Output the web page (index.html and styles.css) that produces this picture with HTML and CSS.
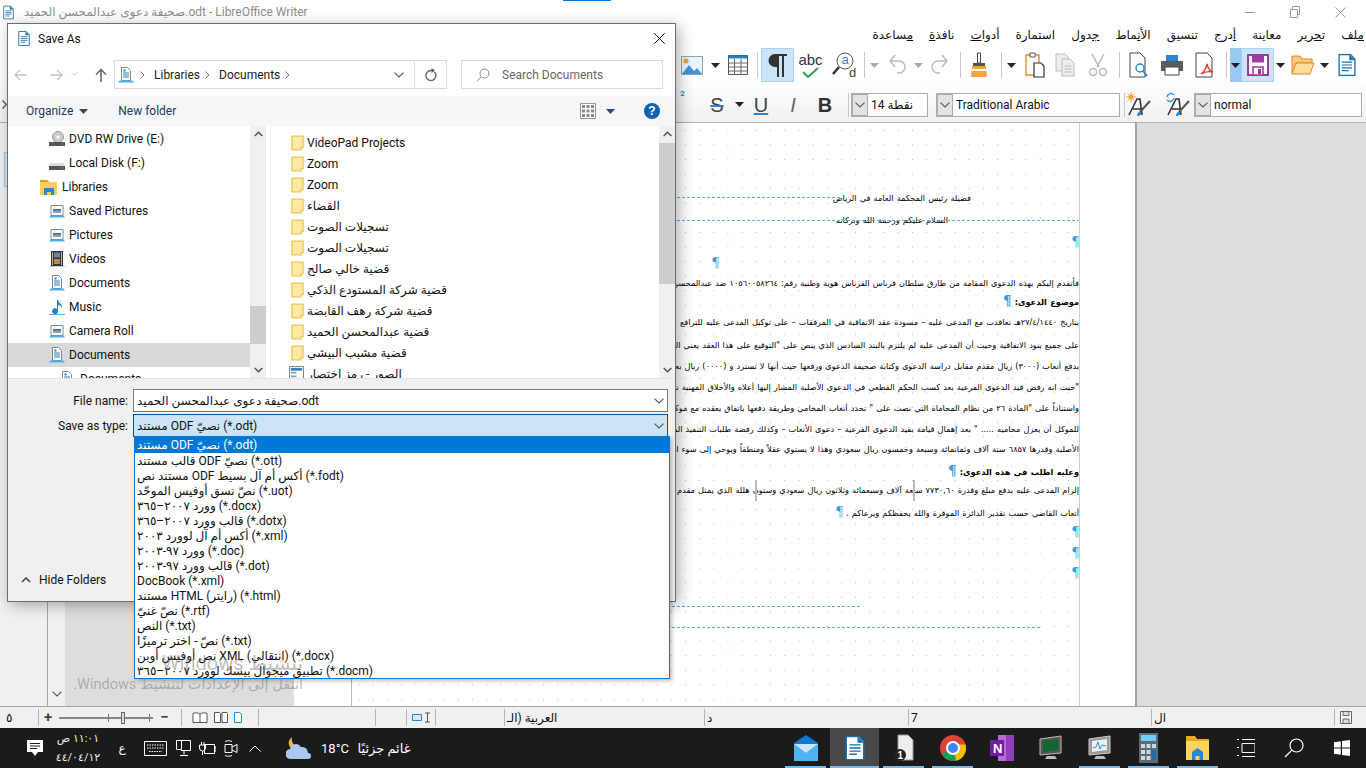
FILE: index.html
```html
<!DOCTYPE html>
<html lang="ar">
<head>
<meta charset="utf-8">
<title>LibreOffice Writer</title>
<link rel="stylesheet" href="styles.css">
</head>
<body>
<svg class="sprite" aria-hidden="true">
  <symbol id="writer" viewBox="0 0 16 20"><path d="M1 .7h10l4 4v14.600H1z" fill="#fff" stroke="#1a6fb0" stroke-width="1.200"/><path d="M10 .7l5 5h-5z" fill="#1a6fb0"/><path d="M3.500 7.500h9M3.500 10h9M3.500 12.500h9M3.500 15h6" stroke="#1a6fb0" stroke-width="1.100"/></symbol>
  <symbol id="folder" viewBox="0 0 14 17"><path d="M1 1h12v12.500h-2v2.500H1z" fill="#ffe9a3" stroke="#ecc755" stroke-width="1.400"/></symbol>
  <symbol id="pic" viewBox="0 0 16 16"><path d="M2 2.500h12v10H2z" fill="#fff" stroke="#7d8a96"/><path d="M4 6h8v4H4z" fill="#8aa2b6"/><path d="M4 6h8v1.500H4z" fill="#3a6f96"/><path d="M0 14.500h16l-1.500-2H1.500z" fill="#4fb0ec"/></symbol>
  <symbol id="docs" viewBox="0 0 16 16"><path d="M3.500 .5h6l3 3v10h-9z" fill="#fff" stroke="#7d8a96"/><path d="M5 6h6M5 8h6M5 10h6" stroke="#2a7fc0"/><path d="M5.500 2.500h2v2h-2z" fill="#2a7fc0"/><path d="M0 15.500h16l-1.500-2H1.500z" fill="#4fb0ec"/></symbol>
  <symbol id="arrow" viewBox="0 0 9 5"><path d="M0 0h9L4.500 5z" fill="#222"/></symbol>
  <symbol id="arrowg" viewBox="0 0 9 5"><path d="M0 0h9L4.500 5z" fill="#aaa"/></symbol>
  <symbol id="chev" viewBox="0 0 10 6"><path d="M.5.700L5 5l4.500-4.300" fill="none" stroke="#555" stroke-width="1.100"/></symbol>
</svg>

<div class="app">
  <header class="chrome">
    <div class="titlebar">
      <svg class="title-icon"><use href="#writer"/></svg>
      <span class="title-text" dir="ltr">صحيفة دعوى عبدالمحسن الحميد.odt - LibreOffice Writer</span>
      <div class="win-btns">
        <svg width="10" height="10" viewBox="0 0 10 10"><path d="M0 5.500h10" stroke="#999"/></svg>
        <svg width="10" height="12" viewBox="0 0 10 12"><path d="M.5 3.500h7v8h-7zM2.500 3.500v-3h7v8h-2" fill="none" stroke="#999"/></svg>
        <svg width="11" height="11" viewBox="0 0 11 11"><path d="M.5.500l10 10M10.500.500l-10 10" stroke="#999"/></svg>
      </div>
    </div>
    <nav class="menubar" dir="rtl">
      <span><u>م</u>لف</span><span>ت<u>ح</u>رير</span><span>معاينة</span><span><u>أ</u>درج</span><span>تنسيق</span><span>الأ<u>ن</u>ماط</span><span><u>ج</u>دول</span><span>استمارة</span><span>أدوا<u>ت</u></span><span>نافذ<u>ة</u></span><span><u>م</u>ساعدة</span>
    </nav>
    <div class="tools tools-main">
      <i><svg width="24" height="24" viewBox="0 0 24 24"><path d="M1.500 3.500h21v18h-21z" fill="#eaf4fb" stroke="#8aa"/><circle cx="6" cy="8" r="2.500" fill="#f0a030"/><path d="M2 21l7-9 5 6 3-3 5 6z" fill="#3f93d6"/></svg></i>
      <i><svg class="dd"><use href="#arrow"/></svg></i>
      <i><svg width="20" height="20" viewBox="0 0 20 20"><path d="M.5 .5h19v19H.5z" fill="#fff" stroke="#555"/><path d="M.5 .5h19v3H.5z" fill="#2a7fc0"/><path d="M.5 8h19M.5 12h19M.5 16h19M6.500 4v16M13 4v16" stroke="#666"/></svg></i>
      <b class="gap3"></b><i class="sep"></i>
      <i class="on"><svg width="24" height="26" viewBox="0 0 24 26"><path d="M11 2H9a6.500 6.500 0 0 0 0 13h2v10h2V4h3v21h2V4h3V2z" fill="#333"/></svg></i>
      <i><span class="abc">abc<svg width="19" height="11" viewBox="0 0 19 11"><path d="M2 5l5 5L17 1" fill="none" stroke="#2da44e" stroke-width="2"/></svg></span></i>
      <i><svg width="26" height="28" viewBox="0 0 26 28"><circle cx="14" cy="10" r="8" fill="#fff" stroke="#555"/><path d="M8 16l-6 7" stroke="#333" stroke-width="2.500"/><text x="10.500" y="13" class="svgt svgb">a</text><text x="18" y="26" class="svgt">d</text></svg></i>
      <i class="sep"></i>
      <i><svg class="dd"><use href="#arrowg"/></svg></i>
      <i><svg width="22" height="22" viewBox="0 0 22 22"><path d="M5 10h9a6 6 0 0 1 0 12h-2M5 10l5-6M5 10l5 6" transform="translate(0 -3)" fill="none" stroke="#bbb" stroke-width="1.500"/></svg></i>
      <i><svg class="dd"><use href="#arrowg"/></svg></i>
      <i><svg width="22" height="22" viewBox="0 0 22 22"><path d="M17 10H8a6 6 0 0 0 0 12h2M17 10l-5-6M17 10l-5 6" transform="translate(0 -3)" fill="none" stroke="#bbb" stroke-width="1.500"/></svg></i>
      <i class="sep"></i>
      <i><svg width="16" height="26" viewBox="0 0 16 26"><path d="M6.500 1h3v10h-3z" fill="#fff" stroke="#444"/><path d="M2 11h12v3H2z" fill="#555"/><path d="M1 14h14l1 11H0z" fill="#f4a340"/><path d="M1 17h14v2H1z" fill="#fff"/></svg></i>
      <i class="sep"></i>
      <i><svg class="dd"><use href="#arrow"/></svg></i>
      <i><svg width="20" height="26" viewBox="0 0 20 26"><path d="M1 3h13v20H1z" fill="#fff" stroke="#e78a2a" stroke-width="1.400"/><path d="M5 1h5v4H5z" fill="#fff" stroke="#555"/><path d="M9 11h7l3 3v11H9z" fill="#fff" stroke="#333" stroke-width="1.200"/></svg></i>
      <i><svg width="20" height="24" viewBox="0 0 20 24"><path d="M1 1h9l3 3v14H1z" fill="#eee" stroke="#bbb"/><path d="M7 6h8l4 4v13H7z" fill="#eee" stroke="#bbb"/><path d="M9.500 13h7M9.500 16h7M9.500 19h7" stroke="#bbb"/></svg></i>
      <b class="gap3"></b>
      <i><svg width="20" height="24" viewBox="0 0 20 24"><path d="M4 1l7 13M16 1L9 14" stroke="#bbb" stroke-width="1.500"/><circle cx="5" cy="19" r="3.500" fill="none" stroke="#bbb" stroke-width="1.500"/><circle cx="15" cy="19" r="3.500" fill="none" stroke="#bbb" stroke-width="1.500"/></svg></i>
      <i class="sep"></i>
      <i><svg width="20" height="26" viewBox="0 0 20 26"><path d="M1 1h10l5 5v19H1z" fill="#fff" stroke="#444"/><circle cx="11" cy="16" r="4" fill="#fff" stroke="#2a86d0" stroke-width="1.400"/><path d="M14 19l4 5" stroke="#2a86d0" stroke-width="2"/></svg></i>
      <i><svg width="24" height="22" viewBox="0 0 24 22"><path d="M6 1h12v6H6z" fill="#2a86d0"/><path d="M1 7h22v10H1z" fill="#565c60"/><path d="M5 13h14v8H5z" fill="#fff" stroke="#444"/></svg></i>
      <i><svg width="20" height="26" viewBox="0 0 20 26"><path d="M1 1h11l5 5v19H1z" fill="#fff" stroke="#444"/><path d="M12 12c-1 5-3 8-6 10 3-2 7-3 12-2-4-1-5-4-6-8z" fill="none" stroke="#e33" stroke-width="1.300"/></svg></i>
      <i class="sep"></i>
      <b class="gap2"></b>
      <i class="split"><svg class="dd"><use href="#arrow"/></svg></i>
      <i class="on slim"><svg width="22" height="22" viewBox="0 0 22 22"><path d="M1 1h20v20H1z" fill="#fff" stroke="#a03aa3" stroke-width="2"/><path d="M5 1.500h12v7H5z" fill="#a03aa3"/><path d="M6 13h10v8H6z" fill="#fff" stroke="#a03aa3" stroke-width="1.600"/><path d="M11 15h3v5h-3z" fill="#a03aa3"/></svg></i>
      <i><svg class="dd"><use href="#arrow"/></svg></i>
      <i><svg width="24" height="20" viewBox="0 0 24 20"><path d="M1 1h8l2 3h10v4H5L1 19z" fill="#ffc97a" stroke="#e08a22"/><path d="M5 8h18l-4 11H1z" fill="#ffdd9c" stroke="#e08a22"/></svg></i>
      <i><svg class="dd"><use href="#arrow"/></svg></i>
      <i><svg width="18" height="24" viewBox="0 0 16 20"><use href="#writer"/></svg></i>
    </div>
    <div class="tools tools-fmt">
      <span class="sup">²</span>
      <i class="sep"></i>
      <i><span class="fmt strike">S</span></i>
      <i><svg class="dd"><use href="#arrow"/></svg></i>
      <i><span class="fmt under">U</span></i>
      <i><span class="fmt ital">I</span></i>
      <i><span class="fmt bold">B</span></i>
      <i class="sep"></i>
      <div class="combo"><span class="combo-btn"><svg class="chev"><use href="#chev"/></svg></span><span class="combo-val">14 نقطة</span></div>
      <b></b>
      <div class="combo"><span class="combo-btn"><svg class="chev"><use href="#chev"/></svg></span><span class="combo-val">Traditional Arabic</span></div>
      <i class="sep"></i>
      <i><svg width="26" height="26" viewBox="0 0 26 26"><circle cx="5" cy="5" r="2.500" fill="#f4a340"/><path d="M5 0v10M0 5h10M1.500 1.500l7 7M8.500 1.500l-7 7" stroke="#f4a340"/><path d="M3 23L11 7h3l2 16M7 17h9" fill="none" stroke="#333" stroke-width="1.600"/><path d="M14 20L24 9" stroke="#555" stroke-width="2"/><path d="M11 24c0-3 2-5 4-4 1 2-1 4-4 4z" fill="#2a86d0"/></svg></i>
      <b></b>
      <i><svg width="26" height="26" viewBox="0 0 26 26"><path d="M2 5a4 4 0 0 1 7-2M9 6a4 4 0 0 1-7 2" fill="none" stroke="#2a9ae0" stroke-width="1.500"/><path d="M3 23L11 7h3l2 16M7 17h9" fill="none" stroke="#333" stroke-width="1.600"/><path d="M14 20L24 9" stroke="#555" stroke-width="2"/><path d="M11 24c0-3 2-5 4-4 1 2-1 4-4 4z" fill="#2a86d0"/></svg></i>
      <div class="combo"><span class="combo-btn"><svg class="chev"><use href="#chev"/></svg></span><span class="combo-val">normal</span></div>
    </div>
  </header>

  <main class="workspace">
    <aside class="side"></aside>
    <div class="vscroll"><svg class="chev"><use href="#chev"/></svg></div>
    <div class="desk">
      <article class="page">
        <div class="sheet" dir="rtl">
          <div class="ln c1">فضيلة رئيس المحكمة العامة في الرياض</div>
          <div class="ln c2">السلام عليكم ورحمة الله وبركاته</div>
          <div class="ln"><em>¶</em></div>
          <div class="ln c3"><em>¶</em></div>
          <div class="ln">فأتقدم إليكم بهذه الدعوى المقامة من طارق سلطان قرناس القرناس هوية وطنية رقم: ١٠٥٦٠٠٥٨٢٦٤ ضد عبدالمحسن الحميد المقيم في مدينة الرياض</div>
          <div class="ln strong up">موضوع الدعوى: <em>¶</em></div>
          <div class="ln dn1">بتاريخ ٢٧/٤/١٤٤٠هـ تعاقدت مع المدعى عليه – مسودة عقد الاتفاقية في المرفقات – على توكيل المدعى عليه للترافع عني أمام المحكمة في القضية</div>
          <div class="ln dn">على جميع بنود الاتفاقية وحيث أن المدعى عليه لم يلتزم بالبند السادس الذي ينص على "التوقيع على هذا العقد يعني الموافقة على جميع البنود الواردة فيه</div>
          <div class="ln">بدفع أتعاب (٣٠٠٠) ريال مقدم مقابل دراسة الدعوى وكتابة صحيفة الدعوى ورفعها حيث أنها لا تسترد و (٠٠٠٠) ريال بعد صدور الحكم القطعي</div>
          <div class="ln">"حيث انه رفض قيد الدعوى الفرعية بعد كسب الحكم القطعي في الدعوى الأصلية المشار إليها أعلاه والأخلاق المهنية تقتضي ذلك</div>
          <div class="ln t">واستناداً على "المادة ٢٦ من نظام المحاماة التي نصت على " تحدد أتعاب المحامي وطريقة دفعها باتفاق يعقده مع موكله فإن لم يكن هناك اتفاق</div>
          <div class="ln t">للموكل أن يعزل محاميه ..... " بعد إهمال قيامة بقيد الدعوى الفرعية – دعوى الأتعاب – وكذلك رفضة طلبات التنفيذ المقدمة في الدعوى الأصلية</div>
          <div class="ln t">الأصلية وقدرها ٦٨٥٧ ستة آلاف وثمانمائة وسبعة وخمسون ريال سعودي وهذا لا يستوي عقلاً ومنطقاً ويوحي إلى سوء النية في التعامل مع موكله</div>
          <div class="ln t strong">وعليه اطلب في هذه الدعوى: <em>¶</em></div>
          <div class="ln t">إلزام المدعى عليه بدفع مبلغ وقدرة ٧٧٣٠,٦٠ سبعة آلاف وسبعمائة وثلاثون ريال سعودي وستون هلله الذي يمثل مقدم الأتعاب والمبلغ المستحق للموكل</div>
          <div class="ln t">أتعاب القاضي حسب تقدير الدائرة الموقرة والله يحفظكم ويرعاكم . <em>¶</em></div>
          <div class="ln t"><em>¶</em></div>
          <div class="ln t"><em>¶</em></div>
          <div class="ln t"><em>¶</em></div>
          <span class="dash d1"></span><span class="dash d2"></span><span class="dash d3"></span><span class="dash d4"></span>
          <span class="field f1"></span><span class="field f2"></span>
        </div>
      </article>
    </div>
  </main>

  <footer class="status">
    <span class="st st1">٥</span>
    <span class="st st2 zoomer"><b>+</b><span class="slider"><span class="tick t1"></span><span class="thumb"></span><span class="tick t2"></span></span><b>−</b></span>
    <span class="st st3 views">
      <svg width="16" height="11" viewBox="0 0 16 11"><path d="M1 1.500c2-1 5-1 7 .5 2-1.500 5-1.500 7-.5v9H1zM8 2v8.500" fill="#fff" stroke="#555"/></svg>
      <svg width="14" height="11" viewBox="0 0 14 11"><path d="M.5.500h5l1 1v9h-6zM8 .5h5l.5 1v9H8z" fill="#fff" stroke="#555"/></svg>
      <svg width="8" height="11" viewBox="0 0 8 11"><path d="M.5.500h5l2 2v8h-7z" fill="#fff" stroke="#2a86d0"/></svg>
    </span>
    <span class="st"></span>
    <span class="st"></span>
    <span class="st st6"><svg width="20" height="11" viewBox="0 0 20 11"><path d="M.5 2.500h9v6h-9z" fill="#d5eaf9" stroke="#2a86d0"/><path d="M13 1h5M15.500 1v9M13 10h5" stroke="#555"/></svg></span>
    <span class="st"></span>
    <span class="st st7">العربية (الـ</span>
    <span class="st">د</span>
    <span class="st">7</span>
    <span class="st">ال</span>
    <span class="st st11"><svg width="12" height="13" viewBox="0 0 12 13"><path d="M.5.500h11v12H.5z" fill="#fff" stroke="#666"/><path d="M3 .5h6v4H3zM3 8h6v4.500H3z" fill="#ddd" stroke="#666"/></svg></span>
  </footer>

  <footer class="taskbar">
    <div class="tray">
      <span class="tr"><svg width="16" height="18" viewBox="0 0 16 18"><path d="M0 1h16v12h-5l-3 4-3-4H0z" fill="#fff"/><path d="M3 4.500h10M3 7h10M3 9.500h7" stroke="#1b1b1b"/></svg></span>
      <span class="tr clock" dir="rtl"><span>١١:٠١ ص</span><span>٤٤/٠٤/١٢</span></span>
      <span class="tr lang">ع</span>
      <span class="tr"><svg width="23" height="15" viewBox="0 0 23 15"><path d="M.5.500h22v14H.5z" fill="none" stroke="#fff"/><path d="M3 4h17M3 7h17M5 10.500h13" stroke="#fff" stroke-dasharray="1.500 1"/></svg></span>
      <span class="tr"><svg width="15" height="17" viewBox="0 0 15 17"><path d="M.5.500h5v9h-5zM3 .5h11.500v10H5M8 10.500v4M4 15.500h8" fill="none" stroke="#fff"/></svg></span>
      <span class="tr"><svg width="17" height="13" viewBox="0 0 17 13"><path d="M5.500 2.500h10v9h-10zM15.500 5h1.500v4h-1.500M2.500 0v3M5 0v3M.5 3h6v3a3 3 0 0 1-6 0zM3.500 9v4" fill="none" stroke="#fff"/></svg></span>
      <span class="tr"><svg width="16" height="17" viewBox="0 0 16 17"><path d="M2 4.500h7v8H2zM9 7l5-2.500v8L9 10M2 1.500c2-1 5-1 7 0M2 15.500c2 1 5 1 7 0" fill="none" stroke="#fff"/></svg></span>
      <span class="tr"><svg width="12" height="7" viewBox="0 0 12 7"><path d="M.5 6.500L6 1l5.500 5.500" fill="none" stroke="#fff"/></svg></span>
      <span class="tr wx"><svg width="26" height="24" viewBox="0 0 26 24"><path d="M6 1a8 8 0 0 0 8 10A8 8 0 0 1 4 11a7 7 0 0 1 2-10z" fill="#f4b13c"/><path d="M5 23a5 5 0 0 1-1-10 6 6 0 0 1 11-2 6 6 0 0 1 7 6 3 3 0 0 1 0 6z" fill="#a8c8f0"/></svg></span>
      <span class="tr temp">18°C</span>
      <span class="tr cond">غائم جزئيًا</span>
    </div>
    <div class="apps">
      <span class="app-i run"><svg width="24" height="26" viewBox="0 0 24 26"><path d="M0 8L12 0l12 8v18H0z" fill="#0f78d4"/><path d="M0 9l12 9 12-9v17H0z" fill="#4fb3f0"/><path d="M0 9l12 9 12-9" fill="#c9e6fb"/></svg></span>
      <span class="app-i run active"><svg width="20" height="28" viewBox="0 0 16 20"><use href="#writer"/></svg></span>
      <span class="app-i run"><svg width="20" height="28" viewBox="0 0 20 28"><path d="M4 1h10l5 5v20H4z" fill="#eee" stroke="#999"/><circle cx="6" cy="21" r="6" fill="#222"/><text x="3.500" y="25" class="svgw">1</text></svg></span>
      <span class="app-i run"><svg width="26" height="26" viewBox="0 0 26 26"><circle cx="13" cy="13" r="13" fill="#db4437"/><path d="M13 13L2 19a13 13 0 0 0 14 6.700z" fill="#0f9d58"/><path d="M13 13l3 12.700A13 13 0 0 0 25.500 9.500H13z" fill="#fbbc05"/><circle cx="13" cy="13" r="6" fill="#4285f4" stroke="#fff" stroke-width="2"/></svg></span>
      <span class="app-i"><svg width="24" height="28" viewBox="0 0 24 28"><path d="M8 1h16v26H8z" fill="#b66bd6"/><path d="M16 1h8v26h-8z" fill="#8f3fb8"/><path d="M0 6h14v16H0z" fill="#7719aa"/><text x="3" y="18.500" class="svgn">N</text></svg></span>
      <span class="app-i"><svg width="24" height="26" viewBox="0 0 24 26"><path d="M1 4l21-3v17L1 20z" fill="#555" stroke="#bbb"/><path d="M4 6l15-2v11L4 17z" fill="#163"/><path d="M8 21h8l2 3H6z" fill="#bbb"/></svg></span>
      <span class="app-i run"><svg width="24" height="26" viewBox="0 0 24 26"><path d="M1 4l21-3v17L1 20z" fill="#999" stroke="#ccc"/><path d="M4 6l15-2v11L4 17z" fill="#e8f1f7"/><path d="M5 13l3-1 2-5 2 7 2-4 4 1" fill="none" stroke="#3a8fd0"/><path d="M8 21h8l2 3H6z" fill="#bbb"/></svg></span>
      <span class="app-i run"><svg width="19" height="30" viewBox="0 0 19 30"><path d="M0 0h19v30H0z" fill="#5b6b78"/><path d="M2 2h15v6H2z" fill="#6fd0f5"/><path d="M2 11h4v4H2zM7.500 11h4v4h-4zM13 11h4v4h-4zM2 17h4v4H2zM7.500 17h4v4h-4zM2 23h4v4H2zM7.500 23h4v4h-4z" fill="#cfd8de"/><path d="M13 17h4v10h-4z" fill="#1e6fb0"/></svg></span>
      <span class="app-i run"><svg width="23" height="24" viewBox="0 0 23 24"><path d="M0 0h9l2 3h12v21H0z" fill="#e8a818"/><path d="M0 5h23v19H0z" fill="#ffd35c"/><path d="M6 24v-8l5.500-4 5.500 4v8z" fill="#2a86d0"/><path d="M9.500 24v-4h4v4z" fill="#ffd35c"/></svg></span>
      <span class="sys"><svg width="18" height="18" viewBox="0 0 18 18"><path d="M0 .5h2M5 .5h13M0 8.500h2M5 4.500h13v9H5zM0 16.500h2M5 17.500h13" fill="none" stroke="#fff"/></svg></span>
      <span class="sys"><svg width="20" height="20" viewBox="0 0 20 20"><circle cx="12.500" cy="7.500" r="6.500" fill="none" stroke="#fff" stroke-width="1.200"/><path d="M8 12l-7 7" stroke="#fff" stroke-width="1.200"/></svg></span>
      <span class="sys"><svg width="16" height="16" viewBox="0 0 16 16"><path d="M0 2.300l6.800-1V7.500H0zM8 1.100L16 0v7.500H8zM0 8.500h6.800v6.200L0 13.700zM8 8.500h8V16l-8-1.100z" fill="#fff"/></svg></span>
    </div>
  </footer>
</div>

<section class="dialog">
  <div class="dlg-title">
    <svg class="dlg-logo"><use href="#writer"/></svg>
    <span>Save As</span>
    <svg class="dlg-close" width="11" height="11" viewBox="0 0 11 11"><path d="M.3.300l10.400 10.400M10.700.300L.3 10.700" stroke="#111"/></svg>
  </div>
  <div class="dlg-nav">
    <svg class="nav-a" width="14" height="12" viewBox="0 0 14 12"><path d="M13 6H1.500M6 1L1 6l5 5" fill="none" stroke="#c4c4c4" stroke-width="1.300"/></svg>
    <svg class="nav-b" width="14" height="12" viewBox="0 0 14 12"><path d="M1 6h11.500M8 1l5 5-5 5" fill="none" stroke="#c4c4c4" stroke-width="1.300"/></svg>
    <svg class="nav-c" width="7" height="5" viewBox="0 0 7 5"><path d="M.5.500l3 3 3-3" fill="none" stroke="#c4c4c4"/></svg>
    <svg class="nav-d" width="12" height="14" viewBox="0 0 12 14"><path d="M6 14V1.500M1 6.500l5-5 5 5" fill="none" stroke="#666" stroke-width="1.500"/></svg>
    <div class="address">
      <svg class="addr-i"><use href="#docs"/></svg>
      <svg class="crumb" width="5" height="8" viewBox="0 0 5 8"><path d="M.5.500L4 4 .5 7.500" fill="none" stroke="#777"/></svg>
      <span>Libraries</span>
      <svg class="crumb" width="5" height="8" viewBox="0 0 5 8"><path d="M.5.500L4 4 .5 7.500" fill="none" stroke="#777"/></svg>
      <span>Documents</span>
      <svg class="crumb" width="5" height="8" viewBox="0 0 5 8"><path d="M.5.500L4 4 .5 7.500" fill="none" stroke="#777"/></svg>
      <svg class="chev addr-ch"><use href="#chev"/></svg>
      <span class="refresh"><svg width="12" height="14" viewBox="0 0 12 14"><path d="M9.500 4a5 5 0 1 1-3.500-1.500H9" fill="none" stroke="#666" stroke-width="1.400"/><path d="M6.500 0l3.500 2.500L6.500 5z" fill="#666"/></svg></span>
    </div>
    <div class="search">
      <svg width="14" height="14" viewBox="0 0 14 14"><circle cx="8.500" cy="5.500" r="4.500" fill="none" stroke="#888"/><path d="M5 9l-4 4" stroke="#888"/></svg>
      <span>Search Documents</span>
    </div>
  </div>
  <div class="dlg-bar">
    <span class="org">Organize<svg class="bar-dd" viewBox="0 0 9 5"><path d="M0 0h9L4.500 5z" fill="#3a4a5e"/></svg></span>
    <span class="newf">New folder</span>
    <span class="grow"></span>
    <svg width="16" height="16" viewBox="0 0 16 16"><path d="M.5.500h15v15H.5z" fill="#fff" stroke="#999"/><path d="M2 2h3v3H2zM6.500 2h3v3h-3zM11 2h3v3h-3zM2 6.500h3v3H2zM6.500 6.500h3v3h-3zM11 6.500h3v3h-3zM2 11h3v3H2zM6.500 11h3v3h-3zM11 11h3v3h-3z" fill="#8a8a8a"/></svg>
    <svg class="bar-dd2" viewBox="0 0 9 5"><path d="M0 0h9L4.500 5z" fill="#2f4a70"/></svg>
    <span class="help">?</span>
  </div>
  <div class="dlg-body">
    <div class="tree">
      <div class="t-row l1"><svg width="16" height="16" viewBox="0 0 16 16"><circle cx="9" cy="6" r="5.500" fill="#ccc" stroke="#999"/><circle cx="9" cy="6" r="1.500" fill="#fff"/><path d="M0 11h16v4H0z" fill="#555"/><path d="M12 13h2" stroke="#4c4"/></svg>DVD RW Drive (E:)</div>
      <div class="t-row l1"><svg width="16" height="16" viewBox="0 0 16 16"><path d="M1 8h14l1 3H0z" fill="#ddd"/><path d="M0 11h16v4H0z" fill="#555"/><path d="M12 13h2" stroke="#4c4"/></svg>Local Disk (F:)</div>
      <div class="t-row l0"><svg width="17" height="16" viewBox="0 0 17 16"><path d="M0 1h7l2 2h8v13H0z" fill="#ffcf57"/><path d="M0 1h7l2 2H0z" fill="#e39b14"/><path d="M4 16V9h10v7h-3v-3H7v3z" fill="#2a86d0"/></svg>Libraries</div>
      <div class="t-row l1"><svg width="16" height="16"><use href="#pic"/></svg>Saved Pictures</div>
      <div class="t-row l1"><svg width="16" height="16"><use href="#pic"/></svg>Pictures</div>
      <div class="t-row l1"><svg width="16" height="16" viewBox="0 0 16 16"><path d="M2 0h12v15H2z" fill="#333"/><path d="M5 1.500h6v5H5z" fill="#6a88a8"/><path d="M5 8h6v5H5z" fill="#c58a3c"/><path d="M3 1h1v13H3zM12 1h1v13h-1z" fill="#bbb"/><path d="M0 15.500h16v.5H0z" fill="#4fb0ec"/></svg>Videos</div>
      <div class="t-row l1"><svg width="16" height="16"><use href="#docs"/></svg>Documents</div>
      <div class="t-row l1"><svg width="16" height="16" viewBox="0 0 16 16"><path d="M8 1l1 0c0 3 5 4 4 8-1-2-2-3-4-3v6a3 3 0 1 1-1-2z" fill="#1e7fd0"/><path d="M0 15h16v1H0z" fill="#4fb0ec"/></svg>Music</div>
      <div class="t-row l1"><svg width="16" height="16"><use href="#pic"/></svg>Camera Roll</div>
      <div class="t-row l1 sel"><svg width="16" height="16"><use href="#docs"/></svg>Documents</div>
      <div class="t-row l2"><svg width="16" height="16"><use href="#docs"/></svg>Documents</div>
      <div class="sb sb-tree">
        <svg class="sb-up" width="9" height="6" viewBox="0 0 9 6"><path d="M.7 5l3.800-3.800L8.300 5" fill="none" stroke="#555" stroke-width="1.500"/></svg>
        <span class="sb-thumb"></span>
        <svg class="sb-dn" width="9" height="6" viewBox="0 0 9 6"><path d="M.7 1l3.800 3.800L8.300 1" fill="none" stroke="#555" stroke-width="1.500"/></svg>
      </div>
    </div>
    <div class="list">
      <div class="f-row"><svg class="fi"><use href="#folder"/></svg><span>VideoPad Projects</span></div>
      <div class="f-row"><svg class="fi"><use href="#folder"/></svg><span>Zoom</span></div>
      <div class="f-row"><svg class="fi"><use href="#folder"/></svg><span>Zoom</span></div>
      <div class="f-row"><svg class="fi"><use href="#folder"/></svg><span>القضاء</span></div>
      <div class="f-row"><svg class="fi"><use href="#folder"/></svg><span>تسجيلات الصوت</span></div>
      <div class="f-row"><svg class="fi"><use href="#folder"/></svg><span>تسجيلات الصوت</span></div>
      <div class="f-row"><svg class="fi"><use href="#folder"/></svg><span>قضية خالي صالح</span></div>
      <div class="f-row"><svg class="fi"><use href="#folder"/></svg><span>قضية شركة المستودع الذكي</span></div>
      <div class="f-row"><svg class="fi"><use href="#folder"/></svg><span>قضية شركة رهف القابضة</span></div>
      <div class="f-row"><svg class="fi"><use href="#folder"/></svg><span>قضية عبدالمحسن الحميد</span></div>
      <div class="f-row"><svg class="fi"><use href="#folder"/></svg><span>قضية مشبب البيشي</span></div>
      <div class="f-row"><svg class="fi sc" viewBox="0 0 16 16"><path d="M.5.500h15v15H.5z" fill="#fff" stroke="#778"/><path d="M2 2h12v3H2z" fill="#3a7fb6"/><path d="M2 6h6v2H2zM2 10h6v2H2z" fill="#7aa"/></svg><span>الصور - رمز اختصار</span></div>
      <div class="sb sb-list">
        <svg class="sb-up" width="9" height="6" viewBox="0 0 9 6"><path d="M.7 5l3.800-3.800L8.300 5" fill="none" stroke="#555" stroke-width="1.500"/></svg>
        <span class="sb-thumb"></span>
        <svg class="sb-dn" width="9" height="6" viewBox="0 0 9 6"><path d="M.7 1l3.800 3.800L8.300 1" fill="none" stroke="#555" stroke-width="1.500"/></svg>
      </div>
    </div>
  </div>
  <div class="dlg-foot">
    <div class="fld"><label>File name:</label><div class="inp" dir="ltr"><span>صحيفة دعوى عبدالمحسن الحميد.odt</span><svg class="chev"><use href="#chev"/></svg></div></div>
    <div class="fld"><label>Save as type:</label><div class="inp open" dir="ltr"><span>مستند ODF نصيّ (*.odt)</span><svg class="chev"><use href="#chev"/></svg></div></div>
    <div class="hide"><svg width="10" height="6" viewBox="0 0 10 6"><path d="M1 5l4-4 4 4" fill="none" stroke="#444" stroke-width="1.500"/></svg>Hide Folders</div>
  </div>
</section>

<ul class="dropdown" dir="ltr">
  <li class="cur">مستند ODF نصيّ (*.odt)</li>
  <li>قالب مستند ODF نصيّ (*.ott)</li>
  <li>مستند نص ODF أكس أم آل بسيط (*.fodt)</li>
  <li>نصّ نسق أوفيس الموحّد (*.uot)</li>
  <li>وورد ٢٠٠٧–٣٦٥ (*.docx)</li>
  <li>قالب وورد ٢٠٠٧–٣٦٥ (*.dotx)</li>
  <li>أكس أم آل لوورد ٢٠٠٣ (*.xml)</li>
  <li>وورد ٩٧-٢٠٠٣ (*.doc)</li>
  <li>قالب وورد ٩٧-٢٠٠٣ (*.dot)</li>
  <li>DocBook (*.xml)</li>
  <li>مستند HTML (رايتر) (*.html)</li>
  <li>نصّ غنيّ (*.rtf)</li>
  <li>النص (*.txt)</li>
  <li>نصّ - اختر ترميزًا (*.txt)</li>
  <li>نص أوفيس أوبن XML (انتقالي) (*.docx)</li>
  <li>تطبيق ميجوال بيسك لوورد ٢٠٠٧–٣٦٥ (*.docm)</li>
</ul>

<div class="watermark" dir="rtl">
  <p class="wm1">تنشيط Windows</p>
  <p class="wm2">انتقل إلى الإعدادات لتنشيط Windows.</p>
</div>
<span class="topstrip"></span>
<svg class="edge-chev" width="5" height="9" viewBox="0 0 5 9"><path d="M.5.500L4.500 4.500.5 8.500" fill="none" stroke="#444" stroke-width="1.200"/></svg>
</body>
</html>
```

FILE: styles.css
```css
* { box-sizing: border-box; }
html, body { margin: 0; padding: 0; width: 1366px; height: 768px; overflow: hidden; }
body { font-family: Roboto, "DejaVu Sans", sans-serif; font-size: 12px; color: #111; position: relative; background: #f0f0f0; }
svg { flex: none; }
.sprite { position: absolute; width: 0; height: 0; }
.app { display: flex; flex-direction: column; width: 1366px; height: 768px; }

/* window chrome */
.chrome { height: 123px; flex: none; border-bottom: 1px solid #b4b4b4; background: linear-gradient(#fff 0, #fff 66%, #f1f1f1 100%); }
.titlebar { height: 24px; display: flex; align-items: center; padding-left: 3px; }
.title-icon { width: 11px; height: 15px; margin-right: 10px; }
.title-text { color: #8d8d8d; }
.win-btns { margin-left: auto; display: flex; align-items: center; gap: 35px; padding-right: 20px; }
.menubar { height: 22px; display: flex; align-items: center; gap: 16px; padding-right: 2px; }
.menubar span { white-space: nowrap; }
.menubar u { text-underline-offset: 1px; }

.tools { display: grid; align-items: center; padding-left: 680px; }
.tools > i { display: flex; align-items: center; justify-content: center; font-style: normal; height: 100%; }
.tools-main { height: 40px; padding-top: 2px; padding-bottom: 4px;
  grid-template-columns: 24px 22px 24px 3px 8px 33px 33px 34px 6px 14px 30px 14px 32px 6px 32px 12px 8px 40px 20px 3px 40px 2px 38px 28px 38px 4px 2px 11px 33px 12px 34px 8px 38px; }
.tools-fmt { height: 37px; padding-top: 3px; padding-bottom: 3px;
  grid-template-columns: 17px 0 40px 4px 40px 24px 40px 6px 77px 8px 184px 8px 22px 12px 32px 168px; }
.sep::before { content: ""; width: 1px; height: 26px; background: #c8c8c8; display: block; }
.tools-fmt .sep::before { height: 24px; }
.on { background: #cce4f7; box-shadow: inset 0 0 0 1px #a9d2f2; }
.split { background: #99c9f3; }
.dd { width: 9px; height: 5px; }
.abc { display: flex; flex-direction: column; align-items: center; font-size: 15px; line-height: 15px; color: #333; font-family: "Liberation Sans", sans-serif; }
.svgt { font: 13px "Liberation Sans", sans-serif; fill: #444; }
.svgb { fill: #2a86d0; }
.svgw { font: bold 10px "Liberation Sans", sans-serif; fill: #fff; }
.svgn { font: bold 13px "Liberation Sans", sans-serif; fill: #fff; }
.sup { color: #2a86d0; font-size: 13px; line-height: 14px; align-self: start; }
.fmt { font: 20px/24px "Liberation Sans", sans-serif; color: #444; }
.strike { text-decoration: line-through; text-decoration-color: #2a86d0; }
.under { text-decoration: underline; text-decoration-color: #2a86d0; }
.ital { font-style: italic; color: #666; }
.bold { font-weight: bold; color: #333; }
.combo { height: 24px; display: flex; align-items: stretch; border: 1px solid #adadad; background: #fff; }
.combo-btn { width: 17px; background: #e3e3e3; border: 1px solid #adadad; display: flex; align-items: center; justify-content: center; margin: -1px 0 -1px -1px; border-width: 2px 1px 2px 2px; }
.combo-val { padding-left: 3px; line-height: 22px; white-space: nowrap; }
.chev { width: 10px; height: 6px; }

/* workspace */
.workspace { flex: 1; min-height: 0; display: flex; border-bottom: 1px solid #a6a6a6; }
.side { width: 48px; border-right: 1px solid #a6a6a6; background: #f0f0f0; padding-top: 29px; }
.side::before { content: ""; display: block; width: 4px; height: 33px; margin-left: 4px; background: #d5e7f5; border: 1px solid #9cc5e8; }
.vscroll { width: 17px; background: #f0f0f0; display: flex; align-items: flex-end; justify-content: center; padding-bottom: 9px; }
.desk { flex: 1; background: #dedddb; padding-left: 229px; overflow: hidden; }
.page { width: 843px; height: 100%; background: #fff; border-right: 2px solid #a3a3a3; padding-left: 57px; }
.sheet { position: relative; width: 729px; height: 100%; border-left: 1px solid #b8b8b8; border-right: 1px solid #cfcfcf; padding-top: 65px; overflow: hidden;
  font-family: "DejaVu Sans", sans-serif; font-size: 8.2px;
  background-image: radial-gradient(circle, #b5b5b5 .65px, transparent .8px); background-size: 14.2px 14.6px; }
.ln { height: 21px; line-height: 21px; white-space: nowrap; color: #000; word-spacing: .5px; }
.ln.t { height: 20.5px; line-height: 20.5px; }
.ln.up { margin-top: -4px; }
.ln.dn1 { margin-top: 1px; }
.ln.dn { margin-top: 2px; }
.ln em { font-style: normal; color: #3d9ce0; font-size: 15px; font-family: "Liberation Serif", serif; }
.strong { font-weight: bold; }
.c1 { padding-right: 108px; }
.c2 { padding-right: 131px; margin-top: 1px; }
.c3 { padding-right: 360px; }
.dash { position: absolute; left: 0; height: 1px; background: repeating-linear-gradient(90deg, #58b0e6 0 3px, transparent 3px 5px); }
.d1 { top: 74px; width: 489px; }
.d2 { top: 97px; width: 100%; }
.d3 { top: 483px; width: 509px; }
.d4 { top: 504px; width: 689px; }
.field { position: absolute; width: 2px; height: 21px; background: #bbb; top: 357px; }
.f1 { left: 561px; }
.f2 { left: 403px; }

/* status */
.status { height: 21px; flex: none; display: grid; grid-template-columns: 38px 143px 77px 117px 31px 29px 69px 200px 204px 243px 183px 32px; background: #f0f0f0; align-items: stretch; font-size: 12px; }
.st { display: flex; align-items: center; border-left: 1px solid #b4b4b4; padding-left: 2px; margin: 2px 0; white-space: nowrap; overflow: hidden; }
.st1 { border-left: 0; padding-left: 6px; }
.st2 { padding-left: 5px; gap: 5px; overflow: visible; }
.st2 b { font-size: 15px; color: #444; line-height: 15px; }
.slider { position: relative; width: 94px; height: 2px; background: #888; margin: 0 2px; }
.thumb { position: absolute; left: 62px; top: -5px; width: 4px; height: 12px; background: #ddd; border: 1px solid #666; }
.tick { position: absolute; top: -3px; width: 1px; height: 8px; background: #777; }
.t1 { left: 49px; } .t2 { left: 90px; }
.views { gap: 6px; padding-left: 10px; }
.st6 { padding-left: 5px; }
.st11 { padding-left: 5px; }

/* taskbar */
.taskbar { height: 40px; flex: none; background: #1b1b1b; display: flex; justify-content: space-between; color: #fff; }
.tray { display: grid; grid-template-columns: 27px 60px 28px 38px 18px 30px 18px 30px 50px 30px 68px; padding-left: 21px; align-items: center; height: 40px; }
.tr { display: flex; align-items: center; justify-content: center; white-space: nowrap; }
.wx { padding-left: 8px; }
.clock { flex-direction: column; font-size: 11px; line-height: 19px; color: #eee; }
.lang { font-size: 12px; }
.temp, .cond { font-size: 13px; }
.apps { display: flex; height: 40px; align-items: stretch; }
.app-i { width: 49px; display: flex; align-items: center; justify-content: center; position: relative; }
.app-i.run::after { content: ""; position: absolute; bottom: 0; left: 4px; right: 4px; height: 2px; background: #76b9ed; }
.app-i.active { background: #494949; }
.app-i.active::after { left: 0; right: 0; }
.sys { width: 48px; display: flex; align-items: center; justify-content: center; }

/* dialog */
.dialog { position: absolute; left: 7px; top: 23px; width: 669px; height: 579px; background: #fff; border: 1px solid #6e6e6e; box-shadow: 3px 3px 14px rgba(0,0,0,.32); display: flex; flex-direction: column; }
.dlg-title { height: 29px; display: flex; align-items: center; padding-left: 10px; gap: 8px; flex: none; }
.dlg-logo { width: 12px; height: 15px; }
.dlg-close { margin-left: auto; margin-right: 10px; }
.dlg-nav { height: 43px; flex: none; display: flex; align-items: center; color: #222; }
.nav-a { margin-left: 6px; } .nav-b { margin-left: 21px; } .nav-c { margin-left: 8px; } .nav-d { margin-left: 17px; }
.address { display: flex; align-items: center; width: 333px; height: 29px; margin-left: 7px; border: 1px solid #d9d9d9; padding-left: 3px; }
.addr-i { width: 16px; height: 16px; }
.crumb { margin: 0 9px 0 5px; }
.addr-i + .crumb { margin-left: 6px; }
.addr-ch { margin-left: auto; margin-right: 10px; }
.refresh { width: 32px; height: 100%; border-left: 1px solid #d9d9d9; display: flex; align-items: center; justify-content: center; }
.search { width: 202px; height: 29px; margin-left: 14px; border: 1px solid #d9d9d9; display: flex; align-items: center; gap: 12px; padding-left: 14px; color: #666; }
.dlg-bar { height: 30px; flex: none; background: #f5f6f7; display: flex; align-items: center; padding: 0 15px 0 18px; color: #1e3a5c; }
.org { display: flex; align-items: center; gap: 6px; }
.bar-dd { width: 9px; height: 5px; }
.newf { margin-left: 30px; }
.grow { flex: 1; }
.bar-dd2 { width: 9px; height: 5px; margin: 0 29px 0 10px; }
.help { width: 16px; height: 16px; border-radius: 50%; background: #0f62b0; color: #fff; font: bold 12px/16px "Liberation Sans", sans-serif; text-align: center; }
.dlg-body { height: 252px; flex: none; display: flex; overflow: hidden; }
.tree { width: 258px; flex: none; position: relative; overflow: hidden; padding-top: 1px; }
.t-row { height: 24px; display: flex; align-items: center; gap: 5px; width: 242px; white-space: nowrap; }
.l0 { padding-left: 32px; } .l1 { padding-left: 41px; gap: 4px; } .l2 { padding-left: 51px; }
.sel { background: #d9d9d9; }
.list { flex: 1; position: relative; overflow: hidden; padding-left: 20px; padding-top: 6px; border-left: 1px solid #f0f0f0; margin-left: 4px; }
.f-row { height: 21px; display: flex; align-items: center; gap: 3px; white-space: nowrap; }
.fi { width: 13px; height: 16px; flex: none; }
.sc { width: 15px; height: 15px; margin-left: -2px; }
.sb { position: absolute; right: 0; top: 0; bottom: 0; width: 16px; background: #f0f0f0; display: flex; flex-direction: column; align-items: center; }
.sb-up { position: absolute; top: 5px; }
.sb-dn { position: absolute; bottom: 5px; }
.sb-thumb { position: absolute; left: 0; right: 0; background: #cdcdcd; }
.sb-tree .sb-thumb { top: 180px; height: 38px; }
.sb-list .sb-thumb { top: 17px; height: 141px; }
.dlg-foot { flex: 1; background: #f0f0f0; position: relative; padding-top: 9px; border-top: 1px solid #e3e3e3; }
.fld { display: flex; align-items: center; height: 25px; }
.fld label { width: 120px; text-align: right; margin-right: 5px; white-space: nowrap; }
.inp { width: 535px; height: 23px; border: 1px solid #7a7a7a; background: #fff; display: flex; align-items: center; justify-content: space-between; padding: 0 3px; white-space: nowrap; }
.open { background: #cce4f7; border-color: #005499; }
.hide { position: absolute; left: 13px; top: 194px; display: flex; align-items: center; gap: 8px; }

.dropdown { position: absolute; left: 134px; top: 436px; width: 536px; height: 243px; margin: 0; padding: 0; list-style: none; background: #fff; border: 1px solid #0b79d0; box-shadow: 2px 2px 4px rgba(0,0,0,.25); }
.dropdown li { height: 15px; line-height: 17px; padding-left: 2px; white-space: nowrap; }
.dropdown .cur { height: 16px; line-height: 17px; background: #0078d7; color: #fff; }

.watermark { position: absolute; left: 60px; top: 652px; width: 243px; color: rgba(110,110,110,.45); line-height: 22px; pointer-events: none; white-space: nowrap; }
.watermark p { margin: 0; }
.wm1 { font-size: 20px; }
.wm2 { font-size: 14.5px; }
.topstrip { position: absolute; left: 563px; top: 0; width: 48px; height: 1px; background: #0078d7; }
.edge-chev { position: absolute; left: 2px; top: 100px; }
```
